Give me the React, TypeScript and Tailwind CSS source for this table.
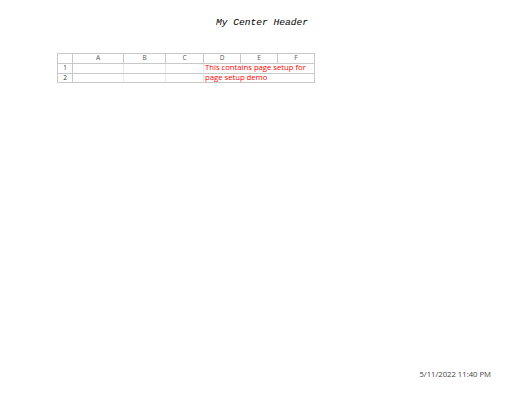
import React from "react";

const cols = ["A", "B", "C", "D", "E", "F"];

export default function App() {
  return (
    <div className="relative flex h-[402px] w-[512px] flex-col bg-white">
      <div className="flex h-[48px] items-start justify-center pl-[12px] pt-[18px]">
        <span
          className="text-[9.6px] italic leading-none text-black"
          style={{ fontFamily: '"Liberation Mono", "Courier New", monospace' }}
        >
          My Center Header
        </span>
      </div>
      <div
        className="ml-[57px] mt-[5px] w-[258px] border-l border-t border-[#c8c8c8]"
        style={{ fontFamily: '"Open Sans", "Liberation Sans", sans-serif' }}
      >
        <div className="grid h-[10px] grid-cols-[15px_51px_42px_38px_37px_37px_37px]">
          <div className="border-b border-r border-[#c8c8c8]"></div>
          {cols.map((c) => (
            <div
              key={c}
              className="flex items-center justify-center border-b border-r border-[#c8c8c8] text-[6.5px] leading-none text-[#555]"
            >
              {c}
            </div>
          ))}
        </div>
        {[1, 2].map((r) => (
          <div
            key={r}
            className="grid h-[9.5px] grid-cols-[15px_51px_42px_38px_111px]"
          >
            <div className="flex items-center justify-center border-b border-r border-[#c8c8c8] text-[6.5px] leading-none text-[#333]">
              {r}
            </div>
            <div className="border-b border-r border-b-[#c8c8c8] border-r-[#e8e8e8]"></div>
            <div className="border-b border-r border-b-[#c8c8c8] border-r-[#e8e8e8]"></div>
            <div className="border-b border-r border-b-[#c8c8c8] border-r-[#e8e8e8]"></div>
            <div className="flex items-center whitespace-nowrap border-b border-r border-[#c8c8c8] pl-[1px] text-[7.7px] leading-none text-[#ff0000]">
              {r === 1 ? "This contains page setup for" : "page setup demo"}
            </div>
          </div>
        ))}
      </div>
      <div className="mt-auto flex justify-end pb-[23px] pr-[21px]">
        <span
          className="text-[7.7px] leading-none text-[#444]"
          style={{ fontFamily: '"Open Sans", "Liberation Sans", sans-serif' }}
        >
          5/11/2022 11:40 PM
        </span>
      </div>
    </div>
  );
}
